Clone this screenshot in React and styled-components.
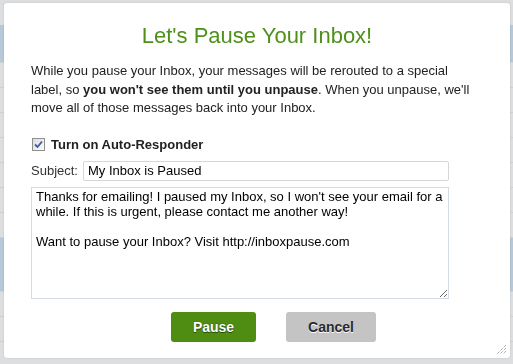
import React from "react";
import styled, { createGlobalStyle } from "styled-components";

const GlobalStyle = createGlobalStyle`
    html, body {
        margin: 0;
        padding: 0;
        width: 513px;
        height: 364px;
        overflow: hidden;
        background: #dcdee0;
        font-family: "Liberation Sans", Arial, sans-serif;
    }
`;

// the dimmed mail list that peeks out round the dialog
const Page = styled.div`
    width: 513px;
    height: 364px;
    overflow: hidden;
    display: flex;
    flex-direction: column;
    padding-top: 25px;
    box-sizing: border-box;
`;

const Row = styled.div`
    height: ${props => props.h}px;
    flex-shrink: 0;
    background: ${props => (props.selected ? "#b7c9d8" : "transparent")};
    border-bottom: 1px solid #cfd1d3;
`;

const Overlay = styled.div`
    position: fixed;
    inset: 0;
`;

const Dialog = styled.div`
    position: absolute;
    top: 3px;
    left: 4px;
    width: 506px;
    height: 355px;
    box-sizing: border-box;
    padding: 20px 27px 0;
    background: #fff;
    border-radius: 3px;
    box-shadow: 0 0 2px rgba(0, 0, 0, 0.15);
`;

const Title = styled.h1`
    margin: 0;
    font-size: 22px;
    line-height: 26px;
    font-weight: normal;
    text-align: center;
    color: #4f901b;
`;

const Intro = styled.p`
    margin: 13px 0 0;
    font-size: 13px;
    line-height: 18.5px;
    color: #222;
    white-space: nowrap;
    b {
        font-weight: bold;
    }
`;

const Form = styled.div`
    width: 418px;
    display: flex;
    flex-direction: column;
`;

const CheckRow = styled.label`
    margin-top: 19px;
    height: 16px;
    display: flex;
    align-items: center;
    gap: 6px;
    padding-left: 1px;
    font-size: 13px;
    font-weight: bold;
    color: #222;
`;

const CheckBox = styled.span`
    width: 11px;
    height: 11px;
    border: 1px solid #8f8f8f;
    background: linear-gradient(135deg, #dcdcdc, #fbfbfb);
    display: flex;
    align-items: center;
    justify-content: center;
    svg {
        display: block;
    }
`;

const SubjectRow = styled.div`
    margin-top: 8px;
    display: flex;
    align-items: center;
    gap: 5px;
    font-size: 13px;
    color: #333;
`;

const TextInput = styled.input`
    flex: 1;
    height: 20px;
    box-sizing: border-box;
    border: 1px solid #d3d6da;
    border-radius: 2px;
    padding: 0 4px;
    font-family: "Liberation Sans", Arial, sans-serif;
    font-size: 13px;
    color: #000;
    outline: none;
`;

const Message = styled.textarea`
    margin-top: 6px;
    width: 418px;
    height: 112px;
    box-sizing: border-box;
    border: 1px solid #d3dae3;
    padding: 1px 4px;
    font-family: "Liberation Sans", Arial, sans-serif;
    font-size: 13px;
    line-height: 15px;
    color: #000;
    resize: vertical;
    outline: none;
`;

const Buttons = styled.div`
    margin: 13px 0 0 140px;
    display: flex;
    gap: 30px;
`;

const Button = styled.button`
    width: ${props => (props.primary ? 85 : 90)}px;
    height: 30px;
    border: none;
    border-radius: 3px;
    background: ${props => (props.primary ? "#4f8c12" : "#c4c4c4")};
    color: ${props => (props.primary ? "#fff" : "#2a2a2a")};
    text-shadow: ${props =>
        props.primary ? "0 0 1px #1d3a05, 0 1px 0 #2c5209" : "0 1px 0 #fff"};
    font-family: "Liberation Sans", Arial, sans-serif;
    font-size: 14px;
    font-weight: bold;
    cursor: pointer;
`;

const Grip = styled.svg`
    position: absolute;
    right: 3px;
    bottom: 3px;
`;

const rows = [37, 24, 24, 24, 24, 24, 24, 24, 53, 24, 24, 24];
const selectedRows = [0, 8];

const messageText =
    "Thanks for emailing! I paused my Inbox, so I won't see your email for a while. If this is urgent, please contact me another way!\n\nWant to pause your Inbox? Visit http://inboxpause.com";

const App = () => {
    return (
        <>
            <GlobalStyle />
            <Page>
                {rows.map((h, i) => (
                    <Row key={i} h={h} selected={selectedRows.includes(i)} />
                ))}
            </Page>
            <Overlay>
                <Dialog>
                    <Title>Let's Pause Your Inbox!</Title>
                    <Intro>
                        While you pause your Inbox, your messages will be rerouted to a special
                        <br />
                        label, so <b>you won't see them until you unpause</b>. When you unpause, we'll
                        <br />
                        move all of those messages back into your Inbox.
                    </Intro>
                    <Form>
                        <CheckRow>
                            <CheckBox>
                                <svg width="9" height="9" viewBox="0 0 9 9">
                                    <path d="M1 4.5 L3.5 7 L8 1.5" fill="none" stroke="#3b5da0" strokeWidth="1.8" />
                                </svg>
                            </CheckBox>
                            Turn on Auto-Responder
                        </CheckRow>
                        <SubjectRow>
                            Subject:
                            <TextInput defaultValue="My Inbox is Paused" />
                        </SubjectRow>
                        <Message defaultValue={messageText} />
                    </Form>
                    <Buttons>
                        <Button primary>Pause</Button>
                        <Button>Cancel</Button>
                    </Buttons>
                    <Grip width="11" height="11" viewBox="0 0 11 11">
                        <path d="M10 1 L1 10 M10 4 L4 10 M10 7 L7 10" stroke="#888" strokeWidth="1" strokeDasharray="1 1" />
                    </Grip>
                </Dialog>
            </Overlay>
        </>
    );
};

export default App;
